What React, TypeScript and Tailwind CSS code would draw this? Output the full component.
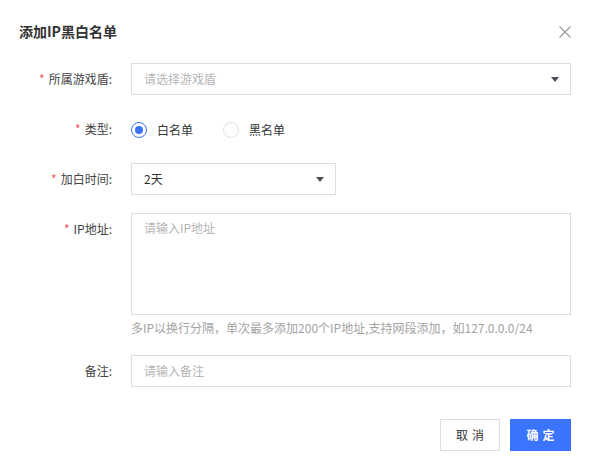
import React from 'react'

const Label = ({ text, required }: { text: string; required?: boolean }) => (
  <div className="w-[131px] shrink-0 pr-[19px] flex justify-end items-center h-[32px] text-[#444]">
    {required && <span className="text-[#f25656] mr-[4px]">*</span>}
    <span>{text}</span>
  </div>
)

const Arrow = () => (
  <span className="w-0 h-0 border-l-[4px] border-r-[4px] border-t-[5px] border-l-transparent border-r-transparent border-t-[#4a4f5a]" />
)

const Radio = ({ checked, label }: { checked?: boolean; label: string }) => (
  <div className="flex items-center">
    <span
      className={
        checked
          ? 'w-[16px] h-[16px] rounded-full border border-[#3b74ff] flex items-center justify-center'
          : 'w-[16px] h-[16px] rounded-full border border-[#e0e0e0]'
      }
    >
      {checked && <span className="w-[8px] h-[8px] rounded-full bg-[#3b74ff]" />}
    </span>
    <span className="ml-[10px] text-[#333]">{label}</span>
  </div>
)

export default function App() {
  return (
    <div className="w-[593px] h-[469px] bg-white text-[12px] font-['Noto_Sans_CJK_SC','Noto_Sans',sans-serif]">
      <div className="h-[63px] flex items-center justify-between pl-[19px] pr-[22px]">
        <h2 className="text-[14px] font-bold text-[#333]">添加IP黑白名单</h2>
        <svg width="12" height="12" viewBox="0 0 12 12" className="text-[#999]">
          <path d="M0.5 0.5 L11.5 11.5 M11.5 0.5 L0.5 11.5" stroke="currentColor" strokeWidth="1.1" fill="none" />
        </svg>
      </div>

      <div className="flex">
        <Label text="所属游戏盾:" required />
        <div className="w-[440px] h-[32px] border border-[#dedede] flex items-center justify-between pl-[12px] pr-[11px]">
          <span className="text-[#b5b5b5]">请选择游戏盾</span>
          <Arrow />
        </div>
      </div>

      <div className="flex mt-[18px]">
        <Label text="类型:" required />
        <div className="h-[32px] flex items-center gap-[30px] pt-[1px]">
          <Radio checked label="白名单" />
          <Radio label="黑名单" />
        </div>
      </div>

      <div className="flex mt-[18px]">
        <Label text="加白时间:" required />
        <div className="w-[205px] h-[32px] border border-[#dedede] flex items-center justify-between pl-[12px] pr-[11px]">
          <span className="text-[#333]">2天</span>
          <Arrow />
        </div>
      </div>

      <div className="flex mt-[18px]">
        <Label text="IP地址:" required />
        <div className="w-[440px]">
          <div className="h-[102px] border border-[#dedede] pl-[12px] pt-[5px]">
            <span className="text-[#b5b5b5]">请输入IP地址</span>
          </div>
          <p className="mt-[4px] leading-[18px] text-[#a3a3a3]">
            多IP以换行分隔，单次最多添加200个IP地址,支持网段添加，如127.0.0.0/24
          </p>
        </div>
      </div>

      <div className="flex mt-[18px]">
        <Label text="备注:" />
        <div className="w-[440px] h-[32px] border border-[#dedede] flex items-center pl-[12px]">
          <span className="text-[#b5b5b5]">请输入备注</span>
        </div>
      </div>

      <div className="flex justify-end gap-[10px] mt-[32px] pr-[22px]">
        <button className="w-[60px] h-[32px] border border-[#dedede] bg-white text-[#333] tracking-[4px] pl-[4px]">
          取消
        </button>
        <button className="w-[61px] h-[32px] bg-[#3b74ff] text-white font-bold tracking-[4px] pl-[4px]">
          确定
        </button>
      </div>
    </div>
  )
}
